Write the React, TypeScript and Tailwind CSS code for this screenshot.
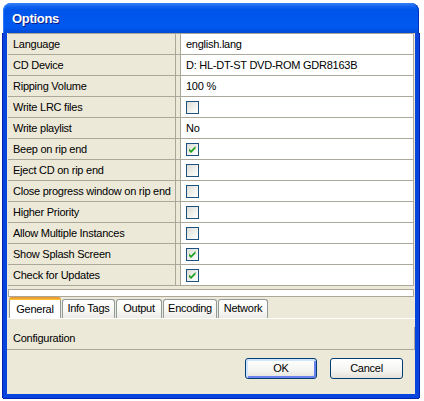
import React from "react";

type Row = { label: string; value?: string; check?: boolean };

const rows: Row[] = [
  { label: "Language", value: "english.lang" },
  { label: "CD Device", value: "D: HL-DT-ST DVD-ROM GDR8163B" },
  { label: "Ripping Volume", value: "100 %" },
  { label: "Write LRC files", check: false },
  { label: "Write playlist", value: "No" },
  { label: "Beep on rip end", check: true },
  { label: "Eject CD on rip end", check: false },
  { label: "Close progress window on rip end", check: false },
  { label: "Higher Priority", check: false },
  { label: "Allow Multiple Instances", check: false },
  { label: "Show Splash Screen", check: true },
  { label: "Check for Updates", check: true },
];

function CheckBox({ checked }: { checked: boolean }) {
  return (
    <div className="w-[13px] h-[13px] border border-[#1C5180] bg-[linear-gradient(135deg,#DCDCD7_0%,#F2F2EE_60%,#FFFFFF_100%)] relative">
      {checked && (
        <svg width="11" height="11" viewBox="0 0 11 11" className="absolute left-0 top-0">
          <polygon points="2,4.5 4,6.5 8.5,2 8.5,4.5 4,9 2,7" fill="#21A121" />
        </svg>
      )}
    </div>
  );
}

function Tab({ label, selected, w }: { label: string; selected?: boolean; w: string }) {
  if (selected) {
    return (
      <div className={`${w} h-[21px] ml-[2px] relative bg-white border-l border-r border-[#919B9C] flex items-center justify-center pt-[4px] rounded-t-[3px]`}>
        <div className="absolute left-[-1px] right-[-1px] top-0 h-[3px] rounded-t-[3px] bg-[linear-gradient(180deg,#E68B2C_0%,#FFC83C_100%)]" />
        <span>{label}</span>
      </div>
    );
  }
  return (
    <div className={`${w} h-[19px] ml-[1px] border border-b-0 border-[#919B9C] rounded-t-[3px] bg-[linear-gradient(180deg,#FFFFFF_0%,#F7F7F4_60%,#ECEBE6_100%)] flex items-center justify-center pb-[1px]`}>
      <span>{label}</span>
    </div>
  );
}

export default function App() {
  return (
    <div className="w-[424px] h-[401px] bg-white pt-[3px] pl-[3px] font-['Liberation_Sans',Arial,sans-serif] text-[11px] tracking-[-0.25px] text-black leading-none">
      <div className="w-[416px] h-[395px] flex flex-col">
        {/* Title bar */}
        <div className="h-[30px] rounded-t-[8px] bg-[linear-gradient(180deg,#3D86F4_0%,#1566F0_10%,#0055EA_22%,#0057EE_55%,#0059F0_80%,#0049D6_100%)] shadow-[inset_1px_1px_0_#2F7BF5,inset_-1px_0_0_#0030B8] flex items-center pl-[9px]">
          <span className="text-white font-bold text-[13px] tracking-[-0.3px] [text-shadow:1px_1px_0_#0A1883]">Options</span>
        </div>
        {/* Body */}
        <div className="flex-1 flex flex-col border-x-[4px] border-b-[4px] border-[#0845DF] shadow-[1px_0_0_#0024B0,-1px_0_0_#0024B0,0_1px_0_#0024B0]">
          <div className="flex-1 flex flex-col bg-[#ECE9D8]">
            {/* Grid */}
            <div className="mx-[1px] border-t border-[#ACA899]">
              {rows.map((r) => (
                <div key={r.label} className="h-[21px] flex border-b border-[#ACA899]">
                  <div className="w-[168px] border-r border-[#ACA899] pl-[5px] flex items-center whitespace-nowrap">
                    {r.label}
                  </div>
                  <div className="w-[5px] border-r border-[#ACA899]" />
                  <div className="flex-1 bg-white border-r border-[#ACA899] flex items-center pl-[5px] whitespace-nowrap">
                    {r.check !== undefined ? <CheckBox checked={r.check} /> : r.value}
                  </div>
                </div>
              ))}
            </div>
            {/* strip */}
            <div className="h-[11px] px-[1px] pt-[3px]">
              <div className="h-[8px] border border-[#ACA899] bg-white" />
            </div>
            {/* Tabs */}
            <div className="h-[21px] flex items-end">
              <Tab label="General" selected w="w-[52px]" />
              <Tab label="Info Tags" w="w-[53px]" />
              <Tab label="Output" w="w-[46px]" />
              <Tab label="Encoding" w="w-[54px]" />
              <Tab label="Network" w="w-[50px]" />
            </div>
            <div className="h-[9px] border-t border-white" />
            {/* description */}
            <div className="h-[23px] border-b border-r border-[#ACA899] flex items-center pl-[6px]">
              Configuration
            </div>
            {/* buttons */}
            <div className="flex-1 flex justify-end items-start pt-[8px] pr-[12px] gap-[13px]">
              <button className="w-[72px] h-[21px] rounded-[3px] border border-[#003C74] bg-[linear-gradient(180deg,#FFFFFF_0%,#F4F4F0_60%,#E3E1D8_100%)] shadow-[inset_1px_1px_0_1px_#CEE7FF,inset_-1px_-1px_0_1px_#6982EE] flex items-center justify-center">
                OK
              </button>
              <button className="w-[73px] h-[21px] rounded-[3px] border border-[#003C74] bg-[linear-gradient(180deg,#FFFFFF_0%,#F4F4F0_60%,#E3E1D8_100%)] flex items-center justify-center">
                Cancel
              </button>
            </div>
          </div>
        </div>
      </div>
    </div>
  );
}
